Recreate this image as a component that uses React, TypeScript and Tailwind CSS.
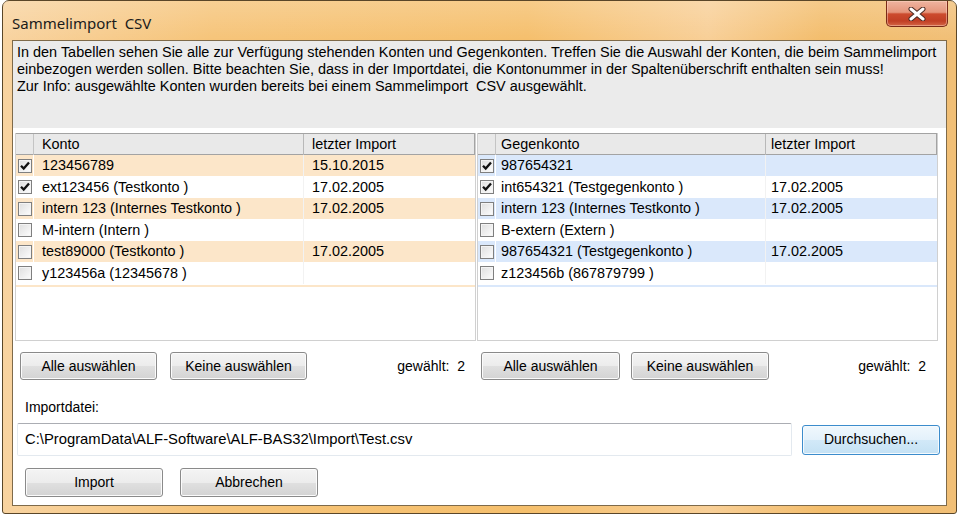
import clsx from "clsx";

type Row = { checked: boolean; name: string; date: string };

const konten: Row[] = [
  { checked: true, name: "123456789", date: "15.10.2015" },
  { checked: true, name: "ext123456 (Testkonto )", date: "17.02.2005" },
  { checked: false, name: "intern 123 (Internes Testkonto )", date: "17.02.2005" },
  { checked: false, name: "M-intern (Intern )", date: "" },
  { checked: false, name: "test89000 (Testkonto )", date: "17.02.2005" },
  { checked: false, name: "y123456a (12345678 )", date: "" },
];

const gegenkonten: Row[] = [
  { checked: true, name: "987654321", date: "" },
  { checked: true, name: "int654321 (Testgegenkonto )", date: "17.02.2005" },
  { checked: false, name: "intern 123 (Internes Testkonto )", date: "17.02.2005" },
  { checked: false, name: "B-extern (Extern )", date: "" },
  { checked: false, name: "987654321 (Testgegenkonto )", date: "17.02.2005" },
  { checked: false, name: "z123456b (867879799 )", date: "" },
];

const CheckBox = ({ checked }: { checked: boolean }) => (
  <span className="w-[14px] h-[14px] border border-[#7f7f7f] bg-[linear-gradient(135deg,#dedede,#fdfdfd)] shadow-[inset_0_0_0_1px_#f4f4f4] flex items-center justify-center">
    {checked && (
      <svg width="12" height="12" viewBox="0 0 12 12">
        <path d="M2 5.8 L4.7 8.6 L10 2.4" fill="none" stroke="#111111" strokeWidth="2.3" />
      </svg>
    )}
  </span>
);

const WinButton = ({
  label,
  className,
  focused,
}: {
  label: string;
  className: string;
  focused?: boolean;
}) => (
  <button
    className={clsx(
      "rounded-[3px] border text-[14px] text-black",
      focused
        ? "border-[#3c8ccc] bg-[linear-gradient(to_bottom,#f0f8fd_0%,#e3f1fb_50%,#d2e9f8_50%,#c4e1f4_100%)] shadow-[inset_0_0_0_1px_#f4fafe]"
        : "border-[#8a8a8a] bg-[linear-gradient(to_bottom,#f4f4f4_0%,#ececec_50%,#e0e0e0_50%,#d3d3d3_100%)] shadow-[inset_0_0_0_1px_#fbfbfb]",
      className
    )}
  >
    {label}
  </button>
);

const Grid = ({
  title,
  rows,
  alt,
  pad,
}: {
  title: string;
  rows: Row[];
  alt: string;
  pad: string;
}) => (
  <div className="w-[461px] h-[208px] border-x border-b border-[#d0d0d0] bg-white flex flex-col text-[14.4px]">
    <div className="grid grid-cols-[18px_270px_1fr] h-[22px] bg-[#e9e9e9] border-y border-[#a3a3a3]">
      <div className="border-r border-[#c4c4c4]" />
      <div className={clsx("border-r border-[#b8b8b8] flex items-center", pad)}>{title}</div>
      <div className={clsx("border-r border-[#a3a3a3] flex items-center", pad)}>letzter Import</div>
    </div>
    {rows.map((r, i) => (
      <div
        key={i}
        className={clsx(
          "grid grid-cols-[18px_270px_1fr] h-[21.5px] border-b border-white",
          i % 2 === 0 ? alt : "bg-white"
        )}
      >
        <div className="border-r border-white flex items-center justify-center">
          <CheckBox checked={r.checked} />
        </div>
        <div className={clsx("border-r border-[#f2f2f2] flex items-center whitespace-pre", pad)}>
          {r.name}
        </div>
        <div className={clsx("flex items-center", pad)}>{r.date}</div>
      </div>
    ))}
    <div className={clsx("h-[2px] mt-[1px]", alt)} />
  </div>
);

export default function App() {
  return (
    <div className="w-[960px] h-[522px] bg-white pl-[2px] font-['Liberation_Sans',Arial,sans-serif] text-black">
      <div className="w-[955px] h-[514px] rounded-t-[7px] rounded-b-[3px] border border-[#5a4628] bg-[linear-gradient(to_right,#f8d3a0_0%,#f6c479_22%,#f5bf6c_55%,#f8cf97_74%,#f3bd6c_86%,#f1bf76_100%)] flex flex-col">
        <div className="h-[39px] flex justify-between items-start bg-[linear-gradient(to_bottom,rgba(255,255,255,0.2),rgba(255,255,255,0))]">
          <div className="pl-[9px] pt-[12px] text-[15px] leading-[20px] whitespace-pre text-[#1b1b1b] font-['Noto_Sans',sans-serif]">
            Sammelimport  CSV
          </div>
          <div className="mr-[8px] w-[62px] h-[26px] rounded-b-[5px] border border-t-0 border-[#7a2a18] bg-[linear-gradient(to_bottom,#efb4a0_0%,#e5957b_45%,#cc4b2e_52%,#c13f25_80%,#d46646_100%)] shadow-[inset_0_0_0_1px_rgba(255,220,200,0.45)] flex items-center justify-center">
            <svg width="20" height="14" viewBox="0 0 20 14">
              <path d="M4 2 L16 12 M16 2 L4 12" stroke="#4a2a22" strokeWidth="5" strokeLinecap="round" />
              <path d="M4 2 L16 12 M16 2 L4 12" stroke="#ffffff" strokeWidth="3" strokeLinecap="round" />
            </svg>
          </div>
        </div>

        <div className="mx-[9px] mb-[7px] flex-1 border border-[#7e6a4a] bg-white flex flex-col">
          <div className="h-[87px] bg-[#ebebeb] pl-[4px] pt-[3px] text-[14.45px] leading-[17px]">
            <div className="whitespace-nowrap">
              In den Tabellen sehen Sie alle zur Verfügung stehenden Konten und Gegenkonten. Treffen Sie die Auswahl der Konten, die beim Sammelimport
            </div>
            <div className="whitespace-nowrap">
              einbezogen werden sollen. Bitte beachten Sie, dass in der Importdatei, die Kontonummer in der Spaltenüberschrift enthalten sein muss!
            </div>
            <div className="whitespace-pre">Zur Info: ausgewählte Konten wurden bereits bei einem Sammelimport  CSV ausgewählt.</div>
          </div>

          <div className="flex-1 flex flex-col">
            <div className="mt-[5px] pl-[2px] flex gap-[1px]">
              <Grid title="Konto" rows={konten} alt="bg-[#fce6c9]" pad="pl-[8px]" />
              <Grid title="Gegenkonto" rows={gegenkonten} alt="bg-[#dae8fb]" pad="pl-[5px]" />
            </div>

            <div className="mt-[11px] h-[28px] pl-[2px] flex gap-[1px] text-[14px]">
              <div className="w-[461px] flex items-center pl-[5px] gap-[13px]">
                <WinButton label="Alle auswählen" className="w-[137px] h-[28px]" />
                <WinButton label="Keine auswählen" className="w-[137px] h-[28px]" />
                <span className="ml-auto pr-[11px] whitespace-pre">gewählt:  2</span>
              </div>
              <div className="w-[461px] flex items-center pl-[4px] gap-[11px]">
                <WinButton label="Alle auswählen" className="w-[139px] h-[28px]" />
                <WinButton label="Keine auswählen" className="w-[138px] h-[28px]" />
                <span className="ml-auto pr-[12px] whitespace-pre">gewählt:  2</span>
              </div>
            </div>

            <div className="mt-[19px] pl-[12px] text-[14px] leading-[17px]">Importdatei:</div>

            <div className="mt-[7px] pl-[4px] flex items-center gap-[10px]">
              <div className="w-[775px] h-[33px] rounded-[2px] border border-[#e3e9ef] border-t-[#abadb3] bg-white pl-[7px] flex items-center text-[14.8px] whitespace-pre">
                {"C:\\ProgramData\\ALF-Software\\ALF-BAS32\\Import\\Test.csv"}
              </div>
              <WinButton label="Durchsuchen..." className="w-[138px] h-[30px]" focused />
            </div>

            <div className="mt-[12px] pl-[12px] flex gap-[17px]">
              <WinButton label="Import" className="w-[138px] h-[29px]" />
              <WinButton label="Abbrechen" className="w-[138px] h-[29px]" />
            </div>
          </div>
        </div>
      </div>
    </div>
  );
}
